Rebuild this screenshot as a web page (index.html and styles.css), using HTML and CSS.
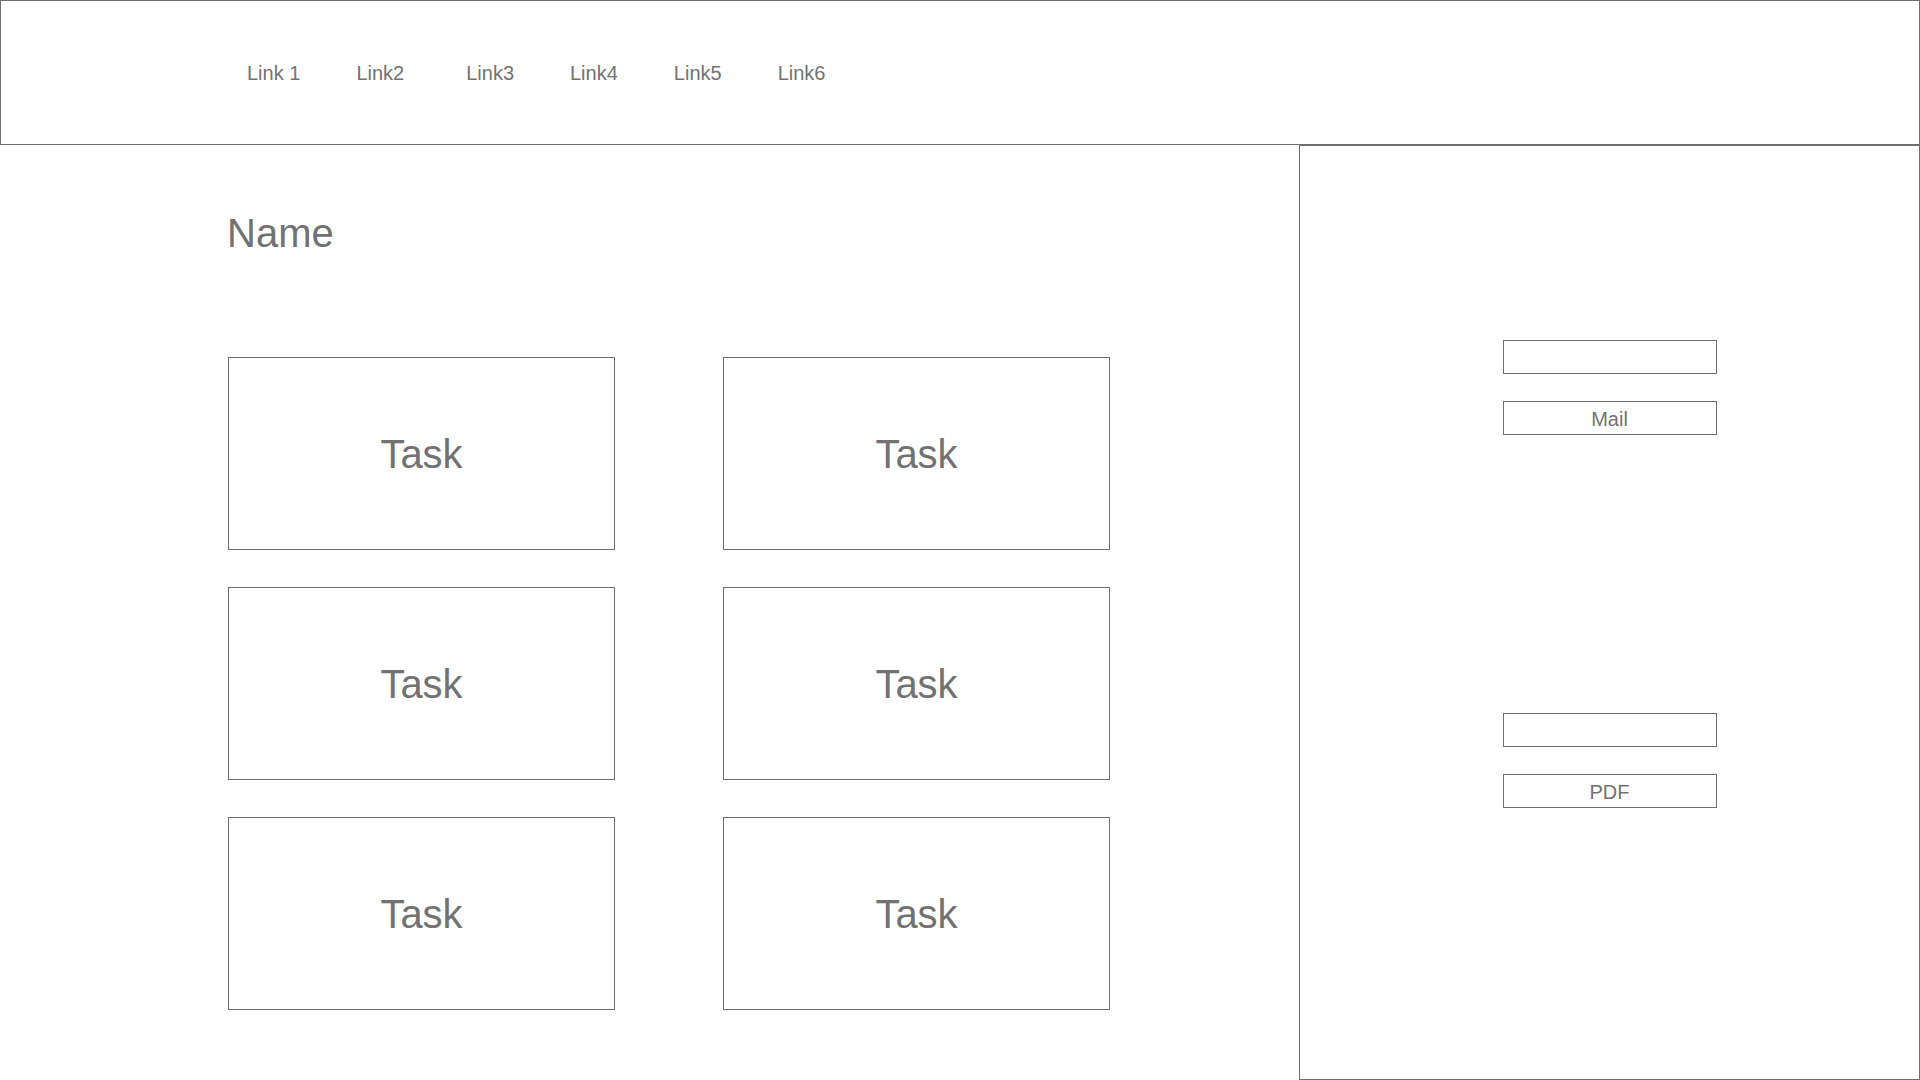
FILE: index.html
```html
<!DOCTYPE html>
<html lang="en">
<head>
<meta charset="utf-8">
<title>Wireframe</title>
<link rel="stylesheet" href="styles.css">
</head>
<body>
<header class="topbar">
  <nav class="nav">
    <a class="nav-link" href="#">Link 1</a>
    <a class="nav-link" href="#">Link2</a>
    <a class="nav-link nav-link--wide" href="#">Link3</a>
    <a class="nav-link" href="#">Link4</a>
    <a class="nav-link" href="#">Link5</a>
    <a class="nav-link" href="#">Link6</a>
  </nav>
</header>
<div class="main">
  <section class="content">
    <h1 class="name">Name</h1>
    <div class="tasks">
      <div class="task">Task</div>
      <div class="task">Task</div>
      <div class="task">Task</div>
      <div class="task">Task</div>
      <div class="task">Task</div>
      <div class="task">Task</div>
    </div>
  </section>
  <aside class="panel">
    <div class="group group--first">
      <input class="field" type="text" aria-label="Mail address">
      <button class="btn" type="button">Mail</button>
    </div>
    <div class="group group--second">
      <input class="field" type="text" aria-label="PDF name">
      <button class="btn" type="button">PDF</button>
    </div>
  </aside>
</div>
</body>
</html>
```

FILE: styles.css
```css
* {
  box-sizing: border-box;
}

html, body {
  margin: 0;
  padding: 0;
  width: 1920px;
  height: 1080px;
  overflow: hidden;
  background: #ffffff;
  font-family: "Liberation Sans", Arial, Helvetica, sans-serif;
  color: #727272;
}

.topbar {
  height: 145px;
  width: 1920px;
  border: 1px solid #6e6e6e;
  display: flex;
  align-items: center;
  padding-top: 2px;
}

.nav {
  display: flex;
  gap: 56px;
  padding-left: 246px;
}

.nav-link {
  font-size: 20px;
  line-height: 23px;
  color: #727272;
  text-decoration: none;
}

.nav-link--wide {
  margin-left: 6px;
}

.main {
  display: flex;
  height: 935px;
}

.content {
  width: 1299px;
  padding-top: 68px;
  padding-left: 228px;
}

.name {
  margin: 0 0 104px -1px;
  font-size: 40px;
  line-height: 40px;
  font-weight: normal;
  color: #727272;
}

.tasks {
  display: grid;
  grid-template-columns: 387px 387px;
  grid-auto-rows: 193px;
  column-gap: 108px;
  row-gap: 37px;
}

.task {
  border: 1px solid #6e6e6e;
  display: flex;
  align-items: center;
  justify-content: center;
  font-size: 40px;
  line-height: 46px;
  color: #727272;
}

.panel {
  width: 621px;
  height: 935px;
  border: 1px solid #6e6e6e;
  display: flex;
  flex-direction: column;
  align-items: center;
}

.group {
  display: flex;
  flex-direction: column;
  gap: 27px;
}

.group--first {
  margin-top: 194px;
}

.group--second {
  margin-top: 278px;
}

.field,
.btn {
  width: 214px;
  height: 34px;
  border: 1px solid #6e6e6e;
  border-radius: 0;
  background: #ffffff;
  margin: 0;
  padding: 0;
  font-family: "Liberation Sans", Arial, Helvetica, sans-serif;
  font-size: 20px;
  color: #727272;
  outline: none;
}

.btn {
  line-height: 32px;
  padding-top: 1px;
  text-align: center;
  cursor: pointer;
}
```
